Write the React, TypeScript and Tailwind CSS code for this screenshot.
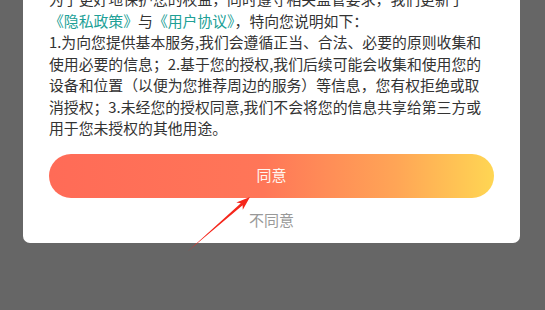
import React from "react";

const lines: React.ReactNode[] = [
  <>为了更好地保护您的权益，同时遵守相关监管要求，我们更新了</>,
  <>
    <span className="text-[#20a096]">《隐私政策》</span>与<span className="text-[#20a096]">《用户协议》</span>，特向您说明如下：
  </>,
  <>1.为向您提供基本服务,我们会遵循正当、合法、必要的原则收集和</>,
  <>使用必要的信息；2.基于您的授权,我们后续可能会收集和使用您的</>,
  <>设备和位置（以便为您推荐周边的服务）等信息，您有权拒绝或取</>,
  <>消授权；3.未经您的授权同意,我们不会将您的信息共享给第三方或</>,
  <>用于您未授权的其他用途。</>,
];

export default function App() {
  return (
    <div
      className="relative h-[310px] w-[545px] overflow-hidden bg-[#666666]"
      style={{ fontFamily: '"Noto Sans CJK SC", "Noto Sans", sans-serif' }}
    >
      <div className="ml-[23px] w-[497px] rounded-b-[7px] bg-white px-[26px] pb-[12px]">
        <div className="-mt-[12px] text-[14.85px] leading-[21.5px] text-[#333333]">
          {lines.map((l, i) => (
            <div key={i} className="whitespace-nowrap">
              {l}
            </div>
          ))}
        </div>
        <div className="mt-[15px] flex h-[44px] w-[445px] items-center justify-center rounded-full bg-[linear-gradient(90deg,#ff6b57_0%,#ff7658_48%,#ffa556_78%,#ffd653_100%)] text-[15px] text-[#fff6f0]">
          同意
        </div>
        <div className="mt-[13px] flex h-[20px] items-center justify-center text-[15px] text-[#999999]">
          不同意
        </div>
      </div>
      <svg className="absolute left-0 top-0" width="545" height="310" viewBox="0 0 545 310">
        <polygon
          points="187,252 242.6,205.3 242.8,209.8 250,197 236.3,202.6 240.8,203.2"
          fill="#f5261b"
        />
      </svg>
    </div>
  );
}
